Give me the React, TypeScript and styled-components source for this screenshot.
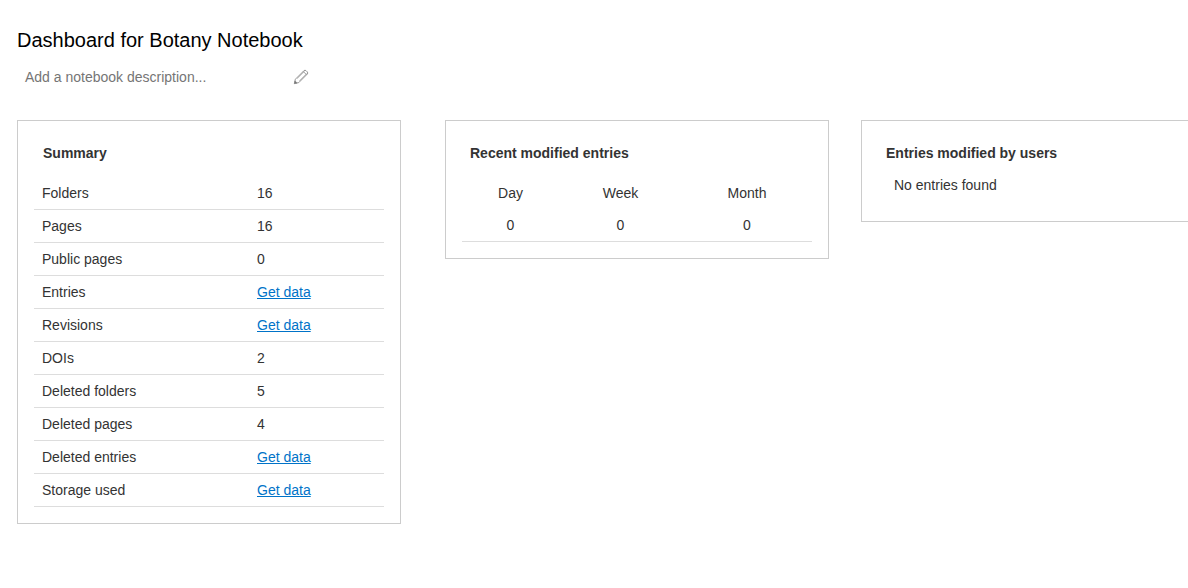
import React from "react";
import styled, { createGlobalStyle } from "styled-components";

const Global = createGlobalStyle`
  html, body { margin: 0; padding: 0; background: #fff; }
  body { font-family: "Liberation Sans", Arial, sans-serif; font-size: 14px; line-height: 20px; color: #333; overflow: hidden; }
`;

const Page = styled.div`
  width: 1188px;
  height: 588px;
  overflow: hidden;
  padding: 28px 0 0 17px;
  box-sizing: border-box;
`;

const Title = styled.h1`
  margin: 0;
  font-size: 20px;
  line-height: 24px;
  font-weight: 400;
  color: #000;
`;

const DescriptionRow = styled.div`
  display: flex;
  align-items: center;
  justify-content: space-between;
  box-sizing: border-box;
  width: 292px;
  height: 20px;
  margin-top: 15px;
  padding-left: 8px;
  color: #757575;
`;

const Panels = styled.div`
  display: flex;
  align-items: flex-start;
  margin-top: 33px;
  width: 1300px;
`;

const Panel = styled.section<{ $gap?: number }>`
  flex: none;
  width: 384px;
  box-sizing: border-box;
  border: 1px solid #ccc;
  padding: 22px 16px 16px;
  margin-right: ${(p) => p.$gap ?? 0}px;
`;

const PanelTitle = styled.h2<{ $indent: number }>`
  margin: 0 0 14px ${(p) => p.$indent}px;
  font-size: 14px;
  line-height: 20px;
  font-weight: 700;
  color: #333;
`;

const Table = styled.table`
  width: 350px;
  border-collapse: collapse;
  table-layout: fixed;
  font-size: 14px;
`;

const Row = styled.tr`
  height: 33px;
  border-bottom: 1px solid #ddd;
  &:first-child { height: 32px; }
`;

const Label = styled.td`
  width: 223px;
  padding: 0 8px;
  box-sizing: border-box;
`;

const Value = styled.td`
  padding: 0;
`;

const DataLink = styled.a`
  color: #0073c8;
  text-decoration: underline;
`;

const HeadCell = styled.th<{ $width: number }>`
  width: ${(p) => p.$width}px;
  height: 32px;
  padding: 0;
  font-weight: 400;
  text-align: center;
`;

const ValueCell = styled.td`
  height: 32px;
  padding: 0;
  text-align: center;
`;

const ValueRow = styled.tr`
  border-bottom: 1px solid #ddd;
`;

const Empty = styled.div`
  margin-left: 16px;
  margin-top: -2px;
  padding-bottom: 10px;
`;

const Pencil = () => (
  <svg width="16" height="16" viewBox="0 0 16 16" fill="none" stroke="#8c8c8c" strokeWidth=".9" strokeLinejoin="round">
    <path d="M1.4 14.6 L2.4 10.2 L10.9 1.7 Q12 .8 13 1.6 L14.4 3 Q15.2 4 14.3 5.1 L5.8 13.6 Z" />
    <path d="M4.2 9.4 L11.6 2 M6.6 11.8 L14 4.4 M10.4 2.6 L13.4 5.6" strokeWidth=".8" />
    <path d="M1.4 14.6 L2 11.9 L4.1 14 Z" fill="#6f6f6f" />
  </svg>
);

const summary: [string, string | null][] = [
  ["Folders", "16"],
  ["Pages", "16"],
  ["Public pages", "0"],
  ["Entries", null],
  ["Revisions", null],
  ["DOIs", "2"],
  ["Deleted folders", "5"],
  ["Deleted pages", "4"],
  ["Deleted entries", null],
  ["Storage used", null],
];

export default function App() {
  return (
    <Page>
      <Global />
      <Title>Dashboard for Botany Notebook</Title>
      <DescriptionRow>
        <span>Add a notebook description...</span>
        <Pencil />
      </DescriptionRow>
      <Panels>
        <Panel $gap={44}>
          <PanelTitle $indent={9}>Summary</PanelTitle>
          <Table>
            <tbody>
              {summary.map(([label, value]) => (
                <Row key={label}>
                  <Label>{label}</Label>
                  <Value>{value ?? <DataLink href="#">Get data</DataLink>}</Value>
                </Row>
              ))}
            </tbody>
          </Table>
        </Panel>
        <Panel $gap={32}>
          <PanelTitle $indent={8}>Recent modified entries</PanelTitle>
          <Table>
            <thead>
              <tr>
                <HeadCell $width={97}>Day</HeadCell>
                <HeadCell $width={123}>Week</HeadCell>
                <HeadCell $width={130}>Month</HeadCell>
              </tr>
            </thead>
            <tbody>
              <ValueRow>
                <ValueCell>0</ValueCell>
                <ValueCell>0</ValueCell>
                <ValueCell>0</ValueCell>
              </ValueRow>
            </tbody>
          </Table>
        </Panel>
        <Panel>
          <PanelTitle $indent={8}>Entries modified by users</PanelTitle>
          <Empty>No entries found</Empty>
        </Panel>
      </Panels>
    </Page>
  );
}
